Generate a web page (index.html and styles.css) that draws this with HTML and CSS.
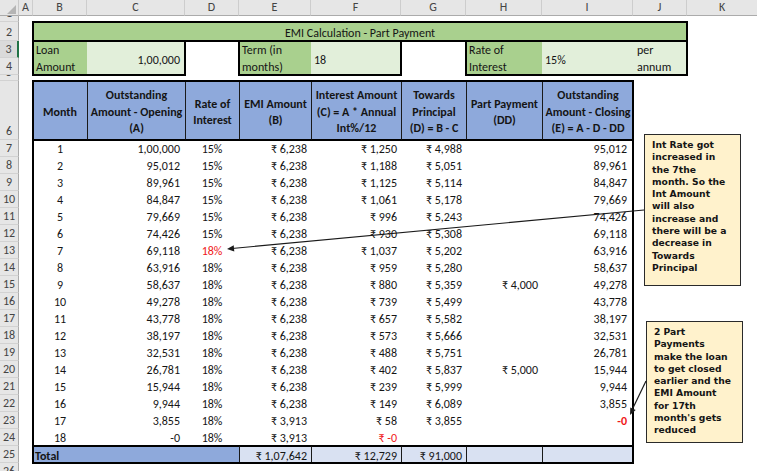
FILE: index.html
```html
<!DOCTYPE html>
<html lang="en">
<head>
<meta charset="utf-8">
<title>EMI Calculation - Part Payment</title>
<link rel="stylesheet" href="styles.css">
</head>
<body>
<div class="colhead">
  <div class="corner"><svg width="19" height="16" viewBox="0 0 19 16"><polygon points="16,5 16,14 7,14" fill="#b4b4b4"/></svg></div>
  <div class="ch w-a">A</div>
  <div class="ch w-b">B</div>
  <div class="ch w-c">C</div>
  <div class="ch w-d">D</div>
  <div class="ch w-e">E</div>
  <div class="ch w-f">F</div>
  <div class="ch w-g">G</div>
  <div class="ch w-h">H</div>
  <div class="ch w-i">I</div>
  <div class="ch w-j">J</div>
  <div class="ch w-k">K</div>
</div>
<div class="body">
  <div class="rowhead">
    <div class="rh h6">1</div>
    <div class="rh h19">2</div>
    <div class="rh h17 sel">3</div>
    <div class="rh h17">4</div>
    <div class="rh h6">5</div>
    <div class="rh h59">6</div>
    <div class="rh h17">7</div>
    <div class="rh h17">8</div>
    <div class="rh h17">9</div>
    <div class="rh h17">10</div>
    <div class="rh h17">11</div>
    <div class="rh h17">12</div>
    <div class="rh h17">13</div>
    <div class="rh h17">14</div>
    <div class="rh h17">15</div>
    <div class="rh h17">16</div>
    <div class="rh h17">17</div>
    <div class="rh h17">18</div>
    <div class="rh h17">19</div>
    <div class="rh h17">20</div>
    <div class="rh h17">21</div>
    <div class="rh h17">22</div>
    <div class="rh h17">23</div>
    <div class="rh h17">24</div>
    <div class="rh h17">25</div>
    <div class="rh h17">26</div>
  </div>
  <div class="grid">
    <div class="title">EMI Calculation - Part Payment</div>
    <div class="box loan">
      <div class="lbl">Loan<br>Amount</div>
      <div class="val right">1,00,000</div>
    </div>
    <div class="box term">
      <div class="lbl">Term (in<br>months)</div>
      <div class="val">18</div>
    </div>
    <div class="box rate">
      <div class="lbl">Rate of<br>Interest</div>
      <div class="val">15%</div>
      <div class="val two">per<br>annum</div>
    </div>

    <div class="tbl">
      <div class="hd">
        <div>Month</div>
        <div>Outstanding<br>Amount - Opening<br>(A)</div>
        <div>Rate of<br>Interest</div>
        <div>EMI Amount<br>(B)</div>
        <div>Interest Amount<br>(C) = A * Annual<br>Int%/12</div>
        <div>Towards<br>Principal<br>(D) = B - C</div>
        <div>Part Payment<br>(DD)</div>
        <div>Outstanding<br>Amount - Closing<br>(E) = A - D - DD</div>
      </div>
      <div class="row"><span>1</span><span>1,00,000</span><span>15%</span><span>₹ 6,238</span><span>₹ 1,250</span><span>₹ 4,988</span><span></span><span>95,012</span></div>
      <div class="row"><span>2</span><span>95,012</span><span>15%</span><span>₹ 6,238</span><span>₹ 1,188</span><span>₹ 5,051</span><span></span><span>89,961</span></div>
      <div class="row"><span>3</span><span>89,961</span><span>15%</span><span>₹ 6,238</span><span>₹ 1,125</span><span>₹ 5,114</span><span></span><span>84,847</span></div>
      <div class="row"><span>4</span><span>84,847</span><span>15%</span><span>₹ 6,238</span><span>₹ 1,061</span><span>₹ 5,178</span><span></span><span>79,669</span></div>
      <div class="row"><span>5</span><span>79,669</span><span>15%</span><span>₹ 6,238</span><span>₹ 996</span><span>₹ 5,243</span><span></span><span>74,426</span></div>
      <div class="row"><span>6</span><span>74,426</span><span>15%</span><span>₹ 6,238</span><span>₹ 930</span><span>₹ 5,308</span><span></span><span>69,118</span></div>
      <div class="row"><span>7</span><span>69,118</span><span class="red">18%</span><span>₹ 6,238</span><span>₹ 1,037</span><span>₹ 5,202</span><span></span><span>63,916</span></div>
      <div class="row"><span>8</span><span>63,916</span><span>18%</span><span>₹ 6,238</span><span>₹ 959</span><span>₹ 5,280</span><span></span><span>58,637</span></div>
      <div class="row"><span>9</span><span>58,637</span><span>18%</span><span>₹ 6,238</span><span>₹ 880</span><span>₹ 5,359</span><span>₹ 4,000</span><span>49,278</span></div>
      <div class="row"><span>10</span><span>49,278</span><span>18%</span><span>₹ 6,238</span><span>₹ 739</span><span>₹ 5,499</span><span></span><span>43,778</span></div>
      <div class="row"><span>11</span><span>43,778</span><span>18%</span><span>₹ 6,238</span><span>₹ 657</span><span>₹ 5,582</span><span></span><span>38,197</span></div>
      <div class="row"><span>12</span><span>38,197</span><span>18%</span><span>₹ 6,238</span><span>₹ 573</span><span>₹ 5,666</span><span></span><span>32,531</span></div>
      <div class="row"><span>13</span><span>32,531</span><span>18%</span><span>₹ 6,238</span><span>₹ 488</span><span>₹ 5,751</span><span></span><span>26,781</span></div>
      <div class="row"><span>14</span><span>26,781</span><span>18%</span><span>₹ 6,238</span><span>₹ 402</span><span>₹ 5,837</span><span>₹ 5,000</span><span>15,944</span></div>
      <div class="row"><span>15</span><span>15,944</span><span>18%</span><span>₹ 6,238</span><span>₹ 239</span><span>₹ 5,999</span><span></span><span>9,944</span></div>
      <div class="row"><span>16</span><span>9,944</span><span>18%</span><span>₹ 6,238</span><span>₹ 149</span><span>₹ 6,089</span><span></span><span>3,855</span></div>
      <div class="row"><span>17</span><span>3,855</span><span>18%</span><span>₹ 3,913</span><span>₹ 58</span><span>₹ 3,855</span><span></span><span class="red bold">-0</span></div>
      <div class="row"><span>18</span><span>-0</span><span>18%</span><span>₹ 3,913</span><span class="red">₹ -0</span><span></span><span></span><span></span></div>
      <div class="tot">
        <span class="tlabel">Total</span><span>₹ 1,07,642</span><span>₹ 12,729</span><span>₹ 91,000</span><span></span><span></span>
      </div>
    </div>
  </div>
</div>

<div class="note n1">Int Rate got<br>increased in<br>the 7the<br>month. So the<br>Int Amount<br>will also<br>increase and<br>there will be a<br>decrease in<br>Towards<br>Principal</div>
<div class="note n2">2 Part<br>Payments<br>make the loan<br>to get closed<br>earlier and the<br>EMI Amount<br>for 17th<br>month's gets<br>reduced</div>

<svg class="arrows" width="757" height="471" viewBox="0 0 757 471">
  <line x1="644" y1="210" x2="232" y2="248.5" stroke="#1a1a1a" stroke-width="1.2"/>
  <polygon points="227,249 234.3,251.6 233.7,245.2" fill="#1a1a1a"/>
  <line x1="646" y1="381" x2="632" y2="410" stroke="#1a1a1a" stroke-width="1.2"/>
  <polygon points="630,415 635.7,410 630.3,407.4" fill="#1a1a1a"/>
</svg>
</body>
</html>
```
FILE: styles.css
```css
* { box-sizing: border-box; margin: 0; padding: 0; }
html, body { width: 757px; height: 471px; overflow: hidden; background: #fff; }
body {
  position: relative;
  font-family: Carlito, Calibri, Lato, "Liberation Sans", sans-serif;
  font-size: 12px;
  color: #151515;
}

/* column header bar */
.colhead { display: flex; height: 16px; }
.corner { width: 19px; height: 16px; background: #e6e6e6; border-right: 1px solid #c8c8c8; border-bottom: 1px solid #ababab; }
.corner svg { display: block; }
.ch {
  height: 16px; background: #e6e6e6; color: #444;
  border-right: 1px solid #cdcdcd; border-bottom: 1px solid #ababab;
  text-align: center; line-height: 15px; font-size: 12px;
}
.w-a { width: 14px; } .w-b { width: 54px; } .w-c { width: 98px; } .w-d { width: 54px; }
.w-e { width: 72px; } .w-f { width: 90px; } .w-g { width: 65px; } .w-h { width: 76px; }
.w-i { width: 91px; } .w-j { width: 54px; } .w-k { width: 70px; border-right: 0; }

/* body */
.body { display: flex; }
.rowhead { width: 19px; display: flex; flex-direction: column; flex: none; }
.rh {
  background: #e6e6e6; color: #444; font-size: 12px;
  border-right: 1px solid #ababab; border-bottom: 1px solid #d2d2d2;
  display: flex; align-items: flex-end; justify-content: center;
  line-height: 16px; overflow: hidden;
}
.rh.sel { border-right: 2px solid #217346; background: #dadada; }
.h6 { height: 6px; } .h17 { height: 17px; } .h19 { height: 19px; } .h59 { height: 59px; }

.grid {
  display: grid;
  grid-template-columns: 14px 54px 98px 54px 72px 90px 65px 76px 91px 54px 70px;
  grid-template-rows: 6px 19px 17px 17px 6px 59px repeat(19, 17px) 17px;
}

/* top info block */
.title {
  grid-area: 2 / 2 / 3 / 11;
  background: #a9d08e;
  text-align: center; line-height: 19px; padding-top: 2px;
  outline: 2px solid #000; outline-offset: -1px;
}
.box { display: grid; outline: 2px solid #000; outline-offset: -1px; }
.loan { grid-area: 3 / 2 / 5 / 4; grid-template-columns: 54px 98px; }
.term { grid-area: 3 / 5 / 5 / 7; grid-template-columns: 72px 90px; }
.rate { grid-area: 3 / 8 / 5 / 11; grid-template-columns: 76px 91px 54px; }
.lbl { background: #a9d08e; line-height: 17px; padding: 1px 0 0 3px; white-space: nowrap; }
.val { background: #e2efda; display: flex; align-items: center; padding: 2px 3px 0; white-space: nowrap; }
.val.right { justify-content: flex-end; padding-right: 5px; }
.val.two { display: block; line-height: 17px; padding: 1px 4px 0; }

/* main table */
.tbl {
  grid-area: 6 / 2 / 26 / 10;
  display: grid;
  grid-template-columns: 54px 98px 54px 72px 90px 65px 76px 91px;
  grid-template-rows: 59px repeat(19, 17px);
  outline: 2px solid #000; outline-offset: -1px;
}
.hd, .row, .tot { display: contents; }
.hd > div {
  background: #8ea9db; font-weight: bold; text-align: center;
  display: flex; align-items: center; justify-content: center;
  line-height: 16.5px; white-space: nowrap; padding-top: 4px;
  border-bottom: 1px solid #000; box-shadow: 0 1px 0 #000;
}
.hd > div + div { border-left: 1px solid #1a1a1a; }

.row > span {
  line-height: 17px; white-space: nowrap; text-align: right; padding: 1px 4px 0 0;
}
.row > span:nth-child(1) { text-align: center; padding-right: 0; }
.row > span:nth-child(2) { padding-right: 5px; }
.row > span:nth-child(3) { text-align: center; padding-right: 0; }
.row > span:nth-child(8) { padding-right: 6px; }
.red { color: #f01818; }
.bold { font-weight: bold; }

.tot > span {
  background: #d9e1f2; line-height: 16px; text-align: right; padding: 1px 4px 0 0;
  white-space: nowrap;
  border-top: 1px solid #000; box-shadow: 0 -1px 0 #000;
  border-left: 1px solid #1a1a1a;
}
.tot > .tlabel {
  grid-column: span 3; background: #8ea9db; text-align: left; font-weight: bold;
  padding-left: 2px; border-left: 0;
}

/* comment boxes */
.note {
  position: absolute;
  background: #fff2cc; border: 1px solid #2a2a2a;
  font-family: "DejaVu Sans", Verdana, sans-serif;
  font-weight: bold; font-size: 9.2px; line-height: 12.3px;
  color: #151515; white-space: nowrap;
  padding: 4px 0 0 7px;
}
.n1 { left: 644px; top: 134px; width: 97px; height: 152px; }
.n2 { left: 646px; top: 321px; width: 97px; height: 122px; }

.arrows { position: absolute; left: 0; top: 0; pointer-events: none; }
```
